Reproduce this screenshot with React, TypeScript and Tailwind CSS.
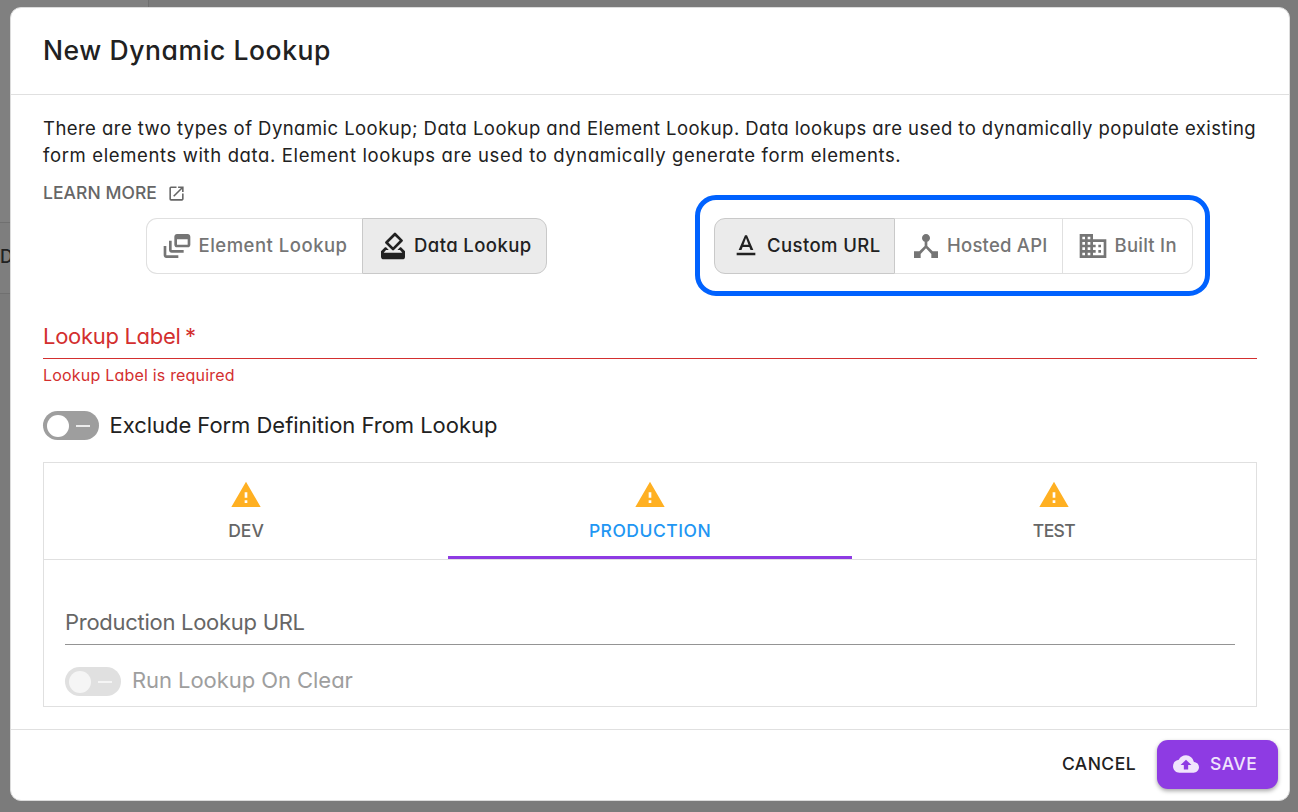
import type { ReactNode } from "react";
import {
  MdBusiness,
  MdCloudUpload,
  MdDeviceHub,
  MdHowToVote,
  MdOpenInNew,
  MdOutlineDynamicFeed,
  MdTextFormat,
  MdWarning,
} from "react-icons/md";

type ToggleProps = {
  icon: ReactNode;
  label: string;
  className: string;
  selected?: boolean;
};

function Toggle({ icon, label, className, selected }: ToggleProps) {
  return (
    <button
      className={`flex h-14 items-center border text-[18.5px] font-medium whitespace-nowrap ${className} ${
        selected ? "border-[#c9c9c9] bg-[#ebebeb] text-[#212121]" : "border-[#e0e0e0] text-[#757575]"
      }`}
    >
      {icon}
      <span className="pb-px">{label}</span>
    </button>
  );
}

function Switch({ disabled }: { disabled?: boolean }) {
  return (
    <span
      className={`flex h-[29px] w-14 items-center justify-between rounded-full pr-[9px] pl-[3.5px] ${
        disabled ? "bg-[#e0e0e0]" : "bg-[#9e9e9e]"
      }`}
    >
      <span className={`size-[22px] rounded-full ${disabled ? "bg-[#f5f5f5]" : "bg-white"}`} />
      <span className={`h-0.5 w-[14px] ${disabled ? "bg-[#f5f5f5]" : "bg-[#ececec]"}`} />
    </span>
  );
}

function Tab({ label, className, active }: { label: string; className: string; active?: boolean }) {
  return (
    <button
      className={`flex flex-1 flex-col items-center border-b-3 pt-4 text-[17.5px] font-medium ${className} ${
        active ? "border-[#8e3be3] text-[#2196f3]" : "border-transparent text-[#666666]"
      }`}
    >
      <MdWarning className="size-8 text-[#ffb022]" />
      <span className="mt-1.5 leading-7">{label}</span>
    </button>
  );
}

export default function App() {
  return (
    <div className="relative h-[812px] w-[1298px] overflow-hidden bg-[#7b7b7b] font-['Inter','Open_Sans',sans-serif] text-[#212121] [font-feature-settings:'cv11']">
      {/* page behind the dialog */}
      <div className="flex h-[294px] w-[149px] flex-col border-r border-[#6f6f6f] bg-[#808080]">
        <div className="mt-[222px] flex h-[72px] items-center border-y border-[#707070] bg-[#7e7e7e] pb-[3px] text-[18px] font-medium">
          D
        </div>
      </div>

      <div className="absolute top-[7px] left-[10px] flex h-[794px] w-[1280px] flex-col rounded-[11px] border border-[#dcdcdc] bg-white">
        <header className="flex h-[87px] shrink-0 items-center border-b border-[#e0e0e0] px-8">
          <h1 className="text-[26.5px] font-medium tracking-[0.58px]">New Dynamic Lookup</h1>
        </header>

        <main className="h-[635px] shrink-0 border-b border-[#e0e0e0] px-8 pt-5">
          <p className="text-[18.5px] leading-[27px] whitespace-nowrap">
            <span className="tracking-[0.45px]">
              There are two types of Dynamic Lookup; Data Lookup and Element Lookup. Data lookups are used to dynamically populate existing
            </span>
            <br />
            <span className="tracking-[0.63px]">
              form elements with data. Element lookups are used to dynamically generate form elements.
            </span>
          </p>
          <a className="mt-[10px] flex h-7 items-center text-[17.5px] font-medium tracking-[0.05px] text-[#666666]">
            LEARN MORE
            <MdOpenInNew className="ml-[10px] size-[19px]" />
          </a>

          <div className="-mt-3 flex">
            <div className="mt-[23px] ml-[103px] flex">
              <Toggle
                icon={<MdOutlineDynamicFeed className="mr-[5.5px] size-8" />}
                label="Element Lookup"
                className="w-[216px] rounded-l-[11px] border-r-0 pl-[14px] tracking-[0.5px]"
              />
              <Toggle
                icon={<MdHowToVote className="mr-[5px] size-8" />}
                label="Data Lookup"
                className="w-[185px] rounded-r-[11px] pl-[14px] tracking-[0.42px]"
                selected
              />
            </div>
            <div className="ml-[148px] flex h-[101px] w-[515px] rounded-[21px] border-5 border-[#0062ff] pt-[18px] pl-[14px]">
              <Toggle
                icon={<MdTextFormat className="mr-[5px] size-8" />}
                label="Custom URL"
                className="w-[181px] rounded-l-[11px] pl-[15px] tracking-[0.42px]"
                selected
              />
              <Toggle
                icon={<MdDeviceHub className="mr-[5px] size-8" />}
                label="Hosted API"
                className="w-[168px] border-l-0 pl-[15px] tracking-[0.23px]"
              />
              <Toggle
                icon={<MdBusiness className="mr-[5.5px] size-8" />}
                label="Built In"
                className="w-[130px] rounded-r-[11px] border-l-0 pl-[14px] tracking-[0.25px]"
              />
            </div>
          </div>

          <div className="mt-[23px] flex h-10 items-center border-b border-[#d32f2f] pb-1 text-[22px] tracking-[-0.3px] text-[#d32f2f]">
            Lookup Label<span className="ml-[4.5px]">*</span>
          </div>
          <p className="mt-[3px] text-[16px] leading-[26px] tracking-[0.2px] text-[#d32f2f]">Lookup Label is required</p>

          <label className="mt-[23px] flex h-[29px] items-center gap-[10.5px] text-[22px] tracking-[-0.04px]">
            <Switch />
            Exclude Form Definition From Lookup
          </label>

          <section className="mt-[22px] h-[245px] border border-[#e0e0e0]">
            <nav className="flex h-[97px] border-b border-[#e0e0e0]">
              <Tab label="DEV" className="" />
              <Tab label="PRODUCTION" className="tracking-[0.5px]" active />
              <Tab label="TEST" className="tracking-[-0.6px]" />
            </nav>
            <div className="px-[21px] pt-11">
              <div className="flex h-[41px] items-center border-b border-[#949494] pb-1 text-[22px] tracking-[-0.28px] text-[#666666]">
                Production Lookup URL
              </div>
              <label className="mt-[22px] flex h-[29px] items-center gap-[11px] text-[22px] tracking-[-0.06px] text-[#9e9e9e]">
                <Switch disabled />
                <span className="pb-0.5">Run Lookup On Clear</span>
              </label>
            </div>
          </section>
        </main>

        <footer className="flex flex-1 items-center justify-end pr-[11px] pb-0.5 text-[17.5px] font-medium tracking-[0.45px]">
          <button className="mr-[21px]">CANCEL</button>
          <button className="flex h-[49px] w-[121px] items-center rounded-[11px] bg-[#8e3be3] pl-4 text-[#f0e4fc] shadow-[0_2px_4px_rgba(0,0,0,0.35)]">
            <MdCloudUpload className="mr-[11px] size-[26px]" />
            SAVE
          </button>
        </footer>
      </div>
    </div>
  );
}
